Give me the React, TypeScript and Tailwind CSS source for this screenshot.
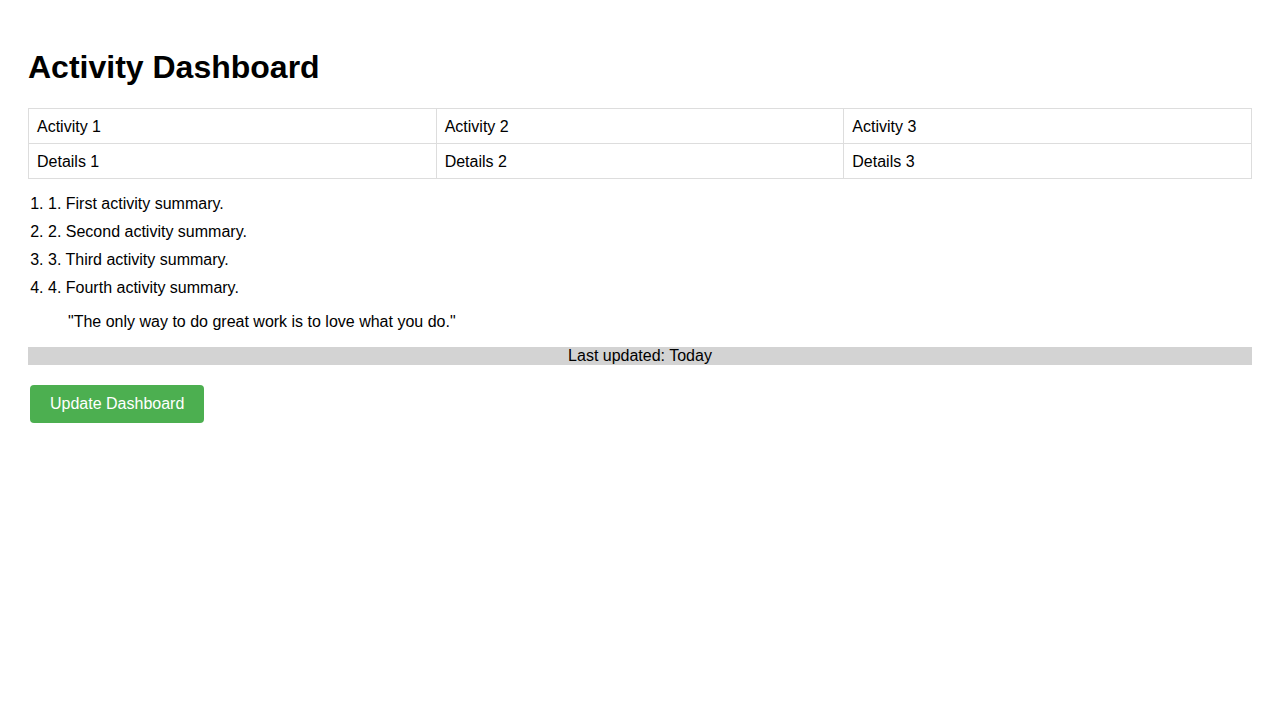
import React from "react";

function App() {
  const activities = [
    { name: "Activity 1", details: "Details 1", id: 0 },
    { name: "Activity 2", details: "Details 2", id: 1 },
    { name: "Activity 3", details: "Details 3", id: 2 },
  ];

  const summaries = [
    "1. First activity summary.",
    "2. Second activity summary.",
    "3. Third activity summary.",
    "4. Fourth activity summary.",
  ];

  return (
    <div className="min-h-screen bg-white p-[28px] text-black font-['Liberation_Sans',Arial,sans-serif]">
      {/* title */}
      <h1 className="mt-[21px] mb-[22px] text-[32px] leading-[37px] font-bold">
        Activity Dashboard
      </h1>

      {/* activities table */}
      <table className="w-full border-collapse text-base">
        <tbody>
          <tr>
            {activities.map((a) => (
              <td key={a.id} className="w-1/3 border border-[#ddd] px-2 pt-[9px] pb-[7px] leading-[18px]">
                {a.name}
              </td>
            ))}
          </tr>
          <tr>
            {activities.map((a) => (
              <td key={a.id} className="w-1/3 border border-[#ddd] px-2 pt-[9px] pb-[7px] leading-[18px]">
                {a.details}
              </td>
            ))}
          </tr>
        </tbody>
      </table>

      {/* summary list */}
      <ol className="mt-[11px] list-decimal pl-[20px] text-base">
        {summaries.map((s) => (
          <li key={s} className="py-[5px] leading-[18px]">
            {s}
          </li>
        ))}
      </ol>

      {/* quote */}
      <blockquote className="mt-[11px] ml-[40px] text-base leading-[18px]">
        "The only way to do great work is to love what you do."
      </blockquote>

      {/* footer bar */}
      <div className="mt-[16px] h-[18px] bg-[#d3d3d3] text-center text-base leading-[18px]">
        Last updated: Today
      </div>

      <button className="mt-[20px] ml-[2px] h-[38px] rounded px-5 bg-[#4caf50] text-base text-white leading-[18px]">
        Update Dashboard
      </button>
    </div>
  );
}

export default App;
